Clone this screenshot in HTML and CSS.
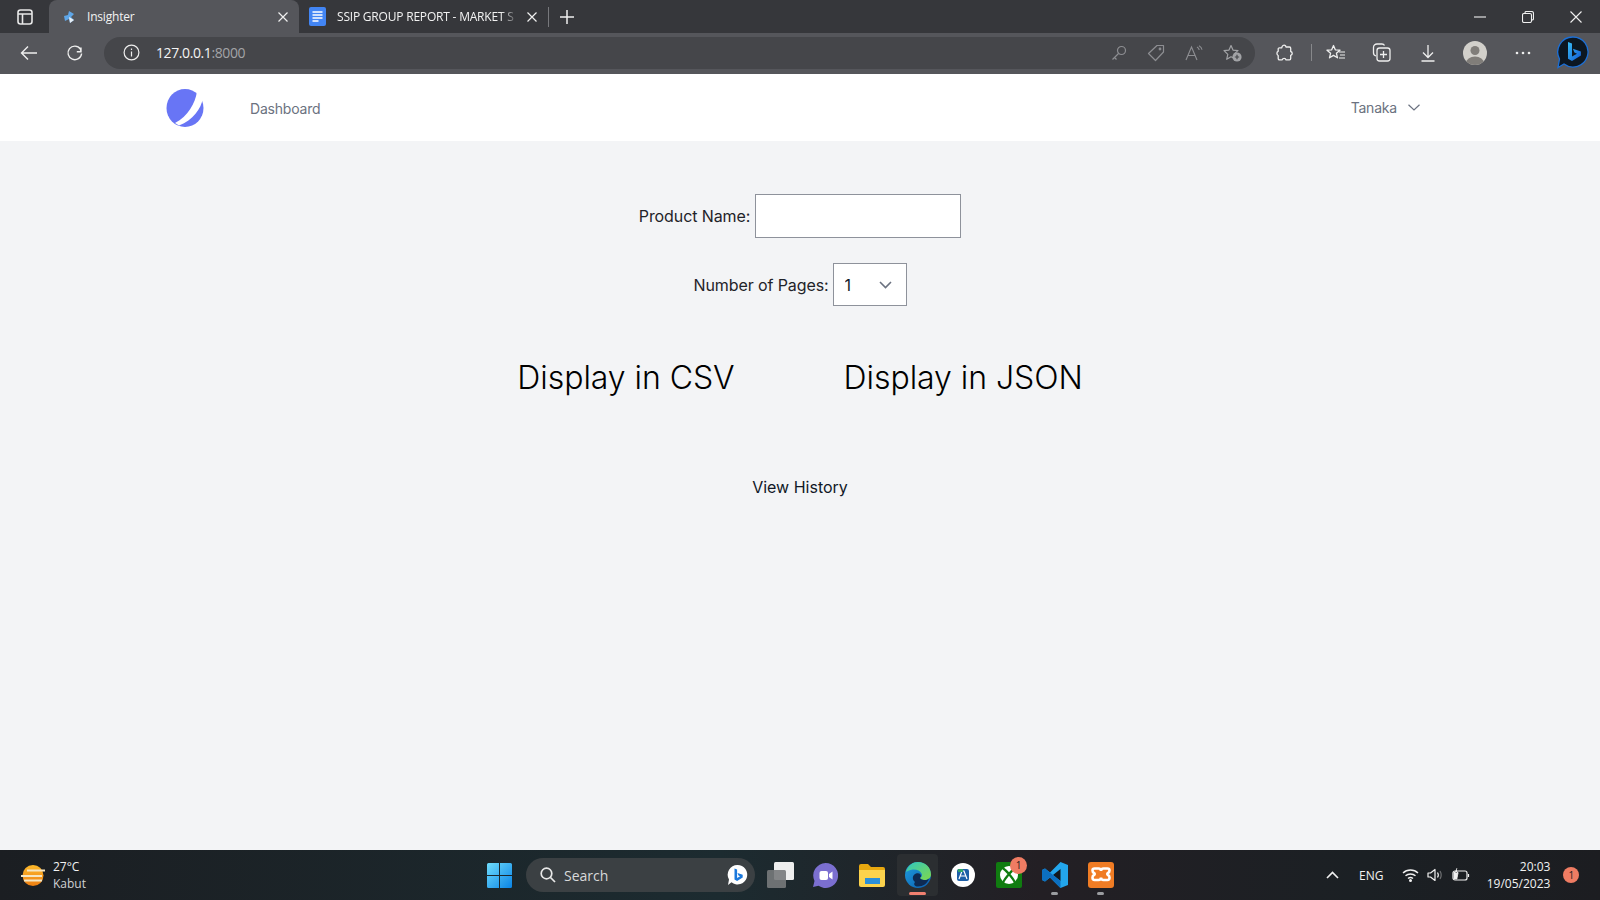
FILE: index.html
```html
<!DOCTYPE html>
<html lang="en">
<head>
    <meta charset="UTF-8">
    <meta name="viewport" content="width=device-width, initial-scale=1.0">
    <title>Insighter</title>
    <link rel="stylesheet" href="styles.css">
</head>
<body>

<!-- Browser tabs -->
<div class="tabbar">
    <svg class="tab-side" width="18" height="18" viewBox="0 0 18 18" fill="none" stroke="#e8e8e8" stroke-width="1.6"><rect x="2" y="2" width="14" height="14" rx="2.5"/><path d="M2 6h14M6.5 6v10" /></svg>
    <div class="tab tab-active">
        <svg class="favicon" width="14" height="14" viewBox="0 0 14 14"><path d="M7 1l5 3-3 3 3 3-4 3-1-4-4 2-1-5 4-1z" fill="#5ea6e8"/><path d="M7 7l5 3-4 3z" fill="#e8eef5"/></svg>
        <span class="tab-title">Insighter</span>
        <svg class="tab-close" width="12" height="12" viewBox="0 0 12 12" stroke="#f0f0f0" stroke-width="1.2"><path d="M1.5 1.5l9 9M10.5 1.5l-9 9"/></svg>
    </div>
    <div class="tab tab-docs">
        <svg class="docs-icon" width="17" height="19" viewBox="0 0 17 19"><rect width="17" height="19" rx="2" fill="#4285f4"/><path d="M3.5 5h10M3.5 8h10M3.5 11h10M3.5 14h6" stroke="#fff" stroke-width="1.5"/></svg>
        <span class="tab-title tab-title-fade">SSIP GROUP REPORT - MARKET S</span>
        <svg class="tab-close" width="12" height="12" viewBox="0 0 12 12" stroke="#f0f0f0" stroke-width="1.2"><path d="M1.5 1.5l9 9M10.5 1.5l-9 9"/></svg>
    </div>
    <div class="tab-divider"></div>
    <svg class="tab-new" width="16" height="16" viewBox="0 0 16 16" stroke="#f0f0f0" stroke-width="1.5"><path d="M8 1v14M1 8h14"/></svg>
    <div class="window-btns">
        <svg width="12" height="12" viewBox="0 0 12 12" stroke="#f0f0f0" stroke-width="1.1"><path d="M0 6h12"/></svg>
        <svg width="12" height="12" viewBox="0 0 12 12" fill="none" stroke="#f0f0f0" stroke-width="1.1"><rect x="0.5" y="2.5" width="9" height="9" rx="1.5"/><path d="M3 2.5V1.8C3 1 3.5.5 4.3.5h5.2c1.2 0 2 .8 2 2v5.2c0 .8-.5 1.3-1.5 1.3"/></svg>
        <svg width="12" height="12" viewBox="0 0 12 12" stroke="#f0f0f0" stroke-width="1.1"><path d="M.5.5l11 11M11.5.5l-11 11"/></svg>
    </div>
</div>

<!-- Browser toolbar -->
<div class="toolbar">
    <svg class="tool-back" width="18" height="16" viewBox="0 0 18 16" fill="none" stroke="#eee" stroke-width="1.4"><path d="M17 8H1.5M8 1.5L1.5 8 8 14.5"/></svg>
    <svg class="tool-reload" width="18" height="18" viewBox="0 0 18 18" fill="none" stroke="#eee" stroke-width="1.4"><path d="M15 3.5v4.2h-4.2M15.6 9.5A6.8 6.8 0 1 1 14.4 5l.6 2.7"/></svg>
    <div class="address">
        <svg class="addr-info" width="17" height="17" viewBox="0 0 17 17" fill="none" stroke="#eee" stroke-width="1.2"><circle cx="8.5" cy="8.5" r="7.4"/><path d="M8.5 7.5v5M8.5 4.5v1.4"/></svg>
        <span class="addr-url">127.0.0.1<span class="addr-port">:8000</span></span>
        <div class="addr-icons">
            <svg width="16" height="16" viewBox="0 0 16 16" fill="none" stroke="#8d8e92" stroke-width="1.2"><circle cx="10.5" cy="5.5" r="4"/><path d="M7.5 8.5l-6 6M3.5 12.5l2 2"/></svg>
            <svg width="18" height="18" viewBox="0 0 18 18" fill="none" stroke="#8d8e92" stroke-width="1.2"><path d="M10 1.5h6.5V8L8.5 16.5 1.5 9.5z" stroke-linejoin="round"/><circle cx="13" cy="5" r=".8"/></svg>
            <svg width="18" height="16" viewBox="0 0 18 16" fill="none" stroke="#8d8e92" stroke-width="1.1"><path d="M1 15L6.5 2 12 15M3 10.5h7M12 2c1.3.7 2 1.7 2.2 3M14 .8c1.8 1 2.8 2.4 3 4"/></svg>
            <svg width="19" height="18" viewBox="0 0 19 18"><path d="M8 1.5l2 4.6 5 .5-3.8 3.3 1.1 4.9L8 12.700l-4.300 2.600 1.100-4.900L1 6.600l5-.5z" fill="none" stroke="#a2a3a6" stroke-width="1.2" stroke-linejoin="round"/><circle cx="14" cy="13" r="4.600" fill="#a2a3a6"/><path d="M14 10.800v4.400M11.800 13h4.400" stroke="#45464a" stroke-width="1.200"/></svg>
        </div>
    </div>
    <svg class="tool-ext" width="18" height="18" viewBox="0 0 18 18" fill="none" stroke="#eee" stroke-width="1.300"><path d="M7 1.500c1.300-.8 2.800 0 3 1.500h3.500c.8 0 1.200.5 1.200 1.200V7.500c1.800.3 2.300 3.300 0 3.800v3.300c0 .8-.5 1.200-1.200 1.200H10c-.4-2-3.300-2-3.800 0H3.500c-.8 0-1.300-.5-1.300-1.200v-3.100C.5 11 .5 7.500 2.200 7.300V5c0-.7.500-1.200 1.300-1.200h2.300c0-1 .4-1.800 1.200-2.300z" stroke-linejoin="round"/></svg>
    <div class="tool-sep"></div>
    <svg class="tool-fav" width="20" height="18" viewBox="0 0 20 18" fill="none" stroke="#eee" stroke-width="1.300"><path d="M7.500 1.500l1.800 4.300 4.700.4-3.600 3 1.100 4.600-4-2.400-4 2.400 1.100-4.600L1 6.200l4.700-.4z" stroke-linejoin="round"/><path d="M13 8h6M14 11h5M13 14h6" stroke-width="1.100"/></svg>
    <svg class="tool-coll" width="20" height="19" viewBox="0 0 20 19" fill="none" stroke="#eee" stroke-width="1.300"><path d="M5 1h5c1.200 0 2 .5 2.500 1.500M4 13c-1.500-.5-2.500-1.500-2.500-3V4.500C1.500 2.500 3 1 5 1"/><rect x="5" y="5" width="13" height="13" rx="2.500"/><path d="M11.500 8v7M8 11.500h7"/></svg>
    <svg class="tool-down" width="16" height="18" viewBox="0 0 16 18" fill="none" stroke="#eee" stroke-width="1.300"><path d="M8 1v12M3 8.500L8 13.500l5-5M1.500 17h13"/></svg>
    <svg class="tool-avatar" width="24" height="24" viewBox="0 0 24 24"><clipPath id="avatarClip"><circle cx="12" cy="12" r="12"/></clipPath><circle cx="12" cy="12" r="12" fill="#d2d0cb"/><g clip-path="url(#avatarClip)" fill="#807d79"><circle cx="12" cy="9.500" r="4.500"/><ellipse cx="12" cy="22" rx="9" ry="6.500"/></g></svg>
    <svg class="tool-more" width="16" height="4" viewBox="0 0 16 4" fill="#eee"><circle cx="2" cy="2" r="1.300"/><circle cx="8" cy="2" r="1.300"/><circle cx="14" cy="2" r="1.300"/></svg>
    <svg class="tool-bing" width="32" height="33" viewBox="0 0 32 33"><defs><linearGradient id="bingGrad" x1="0" y1="0" x2="1" y2="1"><stop offset="0" stop-color="#37bdf5"/><stop offset="1" stop-color="#1259d6"/></linearGradient></defs><path d="M16 1a15 15 0 1 1-9 27L1 31.500 2.500 23A15 15 0 0 1 16 1z" fill="#0c1722" stroke="#1b6fd6" stroke-width="1.300"/><path d="M11 6l4 1.500v13l5-2.800-2.600-1.200-1.500-3.800 8 2.900v4L15 25l-4-2.200z" fill="url(#bingGrad)"/></svg>
</div>

<!-- App nav -->
<nav class="nav">
    <svg class="nav-logo" width="38" height="38" viewBox="0 0 38 38"><ellipse cx="19" cy="19" rx="18.500" ry="19" fill="#6875f5"/><path d="M31 2.500C29 15 22 27 9 34l4 2.500C27 31 35 20 37 9z" fill="#fff"/></svg>
    <a class="nav-link" href="#">Dashboard</a>
    <div class="nav-user">
        <span>Tanaka</span>
        <svg width="12" height="7" viewBox="0 0 12 7" fill="none" stroke="#6b7280" stroke-width="1.200"><path d="M.5.700L6 6l5.500-5.300"/></svg>
    </div>
</nav>

<!-- Form -->
<main class="content">
    <div class="form-row">
        <label for="productName">Product Name:</label>
        <input type="text" id="productName" class="text-input">
    </div>
    <div class="form-row">
        <label for="pages">Number of Pages:</label>
        <div class="select-wrap">
            <select id="pages" class="pages-select">
                <option>1</option>
            </select>
            <svg class="select-arrow" width="13" height="8" viewBox="0 0 13 8" fill="none" stroke="#6b7280" stroke-width="1.600"><path d="M1 1l5.500 5.500L12 1"/></svg>
        </div>
    </div>
    <div class="display-row">
        <button type="button" class="display-btn">Display in CSV</button>
        <button type="button" class="display-btn">Display in JSON</button>
    </div>
    <a class="history-link" href="#">View History</a>
</main>

<!-- Windows taskbar -->
<footer class="taskbar">
    <div class="weather">
        <svg width="26" height="21" viewBox="0 0 26 21"><defs><linearGradient id="sunGrad" x1="0" y1="0" x2="0" y2="1"><stop offset="0" stop-color="#fdb92a"/><stop offset="1" stop-color="#ee7f12"/></linearGradient></defs><circle cx="13" cy="10.500" r="10.500" fill="url(#sunGrad)"/><path d="M7 5.500h18M1 11h21M4 15.500h18" stroke="#f5e6c2" stroke-width="1.800"/></svg>
        <div class="weather-text">
            <span class="weather-temp">27°C</span>
            <span class="weather-name">Kabut</span>
        </div>
    </div>
    <div class="task-center">
        <svg class="task-win" width="25" height="25" viewBox="0 0 25 25"><defs><linearGradient id="winGrad" x1="0" y1="0" x2="1" y2="1"><stop offset="0" stop-color="#6fdcfb"/><stop offset="1" stop-color="#0a84e6"/></linearGradient></defs><path d="M0 1.500A1.500 1.500 0 0 1 1.500 0H12v12H0zM13 0h10.500A1.500 1.500 0 0 1 25 1.500V12H13zM0 13h12v12H1.500A1.500 1.500 0 0 1 0 23.500zM13 13h12v10.500a1.500 1.500 0 0 1-1.500 1.500H13z" fill="url(#winGrad)"/></svg>
        <div class="task-search">
            <svg width="16" height="16" viewBox="0 0 16 16" fill="none" stroke="#e8e8e8" stroke-width="1.700"><circle cx="6.500" cy="6.500" r="5.300"/><path d="M10.500 10.500L15 15"/></svg>
            <span class="search-text">Search</span>
            <svg class="search-bing" width="21" height="22" viewBox="0 0 21 22"><path d="M10.500 1a9.700 9.700 0 1 1-6 17.300L1 21l1-5.500A9.700 9.700 0 0 1 10.500 1z" fill="#fff"/><path d="M7.500 4.500l2.600 1v8.500l3-1.800-1.600-.8-1-2.500 5.200 1.900v2.600l-5.600 3.500-2.600-1.400z" fill="#1a78dc"/></svg>
        </div>
        <svg class="task-view" width="27" height="26" viewBox="0 0 27 26"><rect x="7" y="0" width="20" height="18" rx="1.500" fill="#eee"/><rect x="0" y="8" width="19" height="18" rx="1.500" fill="#77797b" fill-opacity=".9"/></svg>
        <svg class="task-icon task-teams" width="25" height="25" viewBox="0 0 25 25"><path d="M12.500 0a12.500 12.500 0 1 1-7 22.800L0 24l1.500-6A12.500 12.500 0 0 1 12.500 0z" fill="#7b6fd0"/><rect x="6.500" y="8" width="8.500" height="9" rx="2" fill="#fff"/><path d="M16 11l3.500-2.500v8L16 14z" fill="#fff"/></svg>
        <svg class="task-icon task-folder" width="26" height="23" viewBox="0 0 26 23"><path d="M0 2a2 2 0 0 1 2-2h7l3 3h12a2 2 0 0 1 2 2v3H0z" fill="#e8a80f"/><path d="M0 6h26v15a2 2 0 0 1-2 2H2a2 2 0 0 1-2-2z" fill="#fcd34d"/><rect x="6" y="14" width="15" height="6" fill="#2b8fd8"/></svg>
        <div class="task-edge">
            <svg width="26" height="26" viewBox="0 0 26 26"><defs><linearGradient id="edgeBlue" x1="0" y1="0" x2="1" y2="1"><stop offset="0" stop-color="#1f9ee0"/><stop offset="1" stop-color="#0b5cad"/></linearGradient><linearGradient id="edgeGreen" x1="0" y1="0" x2="1" y2="1"><stop offset="0" stop-color="#2fc6c0"/><stop offset="1" stop-color="#7fd84a"/></linearGradient></defs><circle cx="13" cy="13" r="13" fill="url(#edgeBlue)"/><path d="M1 10C3 3 8 0 13 0c7 0 13 5 13 12.500 0 3.500-3 5.500-6.500 5.500-2.500 0-4-1-4.500-2 2-1 2.500-3 1.500-4.500C15 8.500 11.500 7 7.500 7.500 5 8 2.500 9 1 10z" fill="url(#edgeGreen)"/><path d="M10 20c-3-2-3-7 1-8.500 3-1 5 .5 5 2.500 0 1-1 1.500-1 2 .5 1.500 3 2 5 2 2 0 3.500-.7 4-1.500-1.500 5-6 8-11 8-3 0-5-2-3-4.500z" fill="#0e2a52"/></svg>
            <span class="edge-bar"></span>
        </div>
        <svg class="task-icon task-word" width="24" height="24" viewBox="0 0 24 24"><circle cx="12" cy="12" r="12" fill="#fff"/><rect x="6" y="6" width="12" height="12" rx="2" fill="#1d5fa8"/><path d="M8 16l3-8h2l3 8M9.500 13h5" stroke="#fff" stroke-width="1.200" fill="none"/><path d="M7 6h5v3H7z" fill="#2fa36b"/></svg>
        <div class="task-xbox">
            <svg width="26" height="26" viewBox="0 0 26 26"><rect width="26" height="26" rx="2" fill="#107c10"/><circle cx="13" cy="13" r="9" fill="#fff"/><path d="M6 5.500C11 9 16 15 20 22M20 5.500C15 9 10 15 6 22" fill="none" stroke="#107c10" stroke-width="2.200"/></svg>
            <span class="task-badge">1</span>
        </div>
        <div class="task-running">
            <svg width="26" height="26" viewBox="0 0 26 26"><path d="M18.500 0L26 3v20l-7.500 3L8 15.500 3 19.500 0 18V8l3-1.500 5 4z" fill="#23a6ec"/><path d="M18.500 7L11 13l7.500 6z" fill="#12181d"/><path d="M0 8l3-1.500L18.500 19v7L8 15.500 3 19.500 0 18z" fill="#0c6fc0"/></svg>
            <span class="run-dot"></span>
        </div>
        <div class="task-running">
            <svg width="26" height="26" viewBox="0 0 26 26"><rect width="26" height="26" rx="3" fill="#f07c24"/><path d="M6.500 6.500h4c1.500 0 2.500 1 2.500 2.500 0-1.500 1-2.500 2.500-2.500h4c1.500 0 2 1 2 2s-.5 2-1.500 2.500c-1 .5-1 1.500 0 2 1 .5 1.500 1.500 1.500 2.500s-.5 2.500-2 2.500h-4c-1.500 0-2.500-1-2.500-2.500 0 1.500-1 2.500-2.500 2.500h-4c-1.500 0-2-1-2-2.500s.5-2 1.500-2.500c1-.5 1-1.500 0-2-1-.5-1.500-1.500-1.500-2.500s.5-2 2-2z" fill="none" stroke="#fff" stroke-width="2.600"/></svg>
            <span class="run-dot"></span>
        </div>
    </div>
    <div class="tray">
        <svg class="tray-up" width="13" height="8" viewBox="0 0 13 8" fill="none" stroke="#f0f0f0" stroke-width="1.600"><path d="M1 7l5.500-5.500L12 7"/></svg>
        <span class="tray-lang">ENG</span>
        <svg class="tray-wifi" width="17" height="14" viewBox="0 0 17 14" fill="none" stroke="#f0f0f0" stroke-width="1.400"><path d="M1 5c4-4 11-4 15 0M3.500 7.800c2.700-2.500 7.300-2.500 10 0M6 10.500c1.400-1.200 3.600-1.200 5 0"/><circle cx="8.500" cy="12.500" r=".8" fill="#f0f0f0"/></svg>
        <svg class="tray-sound" width="17" height="14" viewBox="0 0 17 14" fill="none" stroke="#f0f0f0" stroke-width="1.200"><path d="M1 5h2.500L8 1.500v11L3.500 9H1z" stroke-linejoin="round"/><path d="M10.500 4.500c1 1.500 1 3.500 0 5"/><path d="M13 3c1.500 2.500 1.500 5.500 0 8" stroke="#6e7072"/></svg>
        <svg class="tray-batt" width="18" height="14" viewBox="0 0 18 14" fill="none" stroke="#f0f0f0" stroke-width="1.200"><rect x="1" y="3" width="14" height="9" rx="2"/><path d="M16.500 6v3"/><path d="M2 4h4l-1 7H2z M5 0L3 5h3l-1 4" fill="#f0f0f0" stroke-width=".6"/></svg>
        <div class="tray-clock">
            <span>20:03</span>
            <span>19/05/2023</span>
        </div>
        <span class="tray-badge">1</span>
    </div>
</footer>

</body>
</html>
```

FILE: styles.css
```css
* {
    box-sizing: border-box;
}

html, body {
    height: 100%;
}

body {
    margin: 0;
    display: flex;
    flex-direction: column;
    font-family: Inter, "Liberation Sans", sans-serif;
    background-color: #f3f4f6;
    overflow: hidden;
}

svg {
    display: block;
    flex-shrink: 0;
}

/* browser tabs */
.tabbar {
    height: 33px;
    display: flex;
    align-items: center;
    background-color: #36373b;
    font-family: "Open Sans", sans-serif;
    font-size: 12px;
    color: #f2f2f2;
}

.tab-side {
    margin: 0 15px 0 16px;
}

.tab {
    height: 33px;
    display: flex;
    align-items: center;
}

.tab-active {
    width: 250px;
    padding: 0 0 0 13px;
    background-color: #55565b;
    border-radius: 8px 8px 0 0;
}

.tab-active .tab-title {
    margin-left: 11px;
    width: 190px;
}

.tab-docs {
    margin-left: 10px;
}

.tab-docs .docs-icon {
    margin-right: 11px;
}

.tab-title {
    white-space: nowrap;
    overflow: hidden;
    letter-spacing: -0.2px;
}

.tab-title-fade {
    width: 182px;
    -webkit-mask-image: linear-gradient(to right, #000 90%, transparent);
    mask-image: linear-gradient(to right, #000 90%, transparent);
}

.tab-docs .tab-close {
    margin-left: 7px;
}

.tab-divider {
    width: 1px;
    height: 20px;
    margin-left: 10px;
    background-color: #77787c;
}

.tab-new {
    margin-left: 10px;
}

.window-btns {
    margin-left: auto;
    display: flex;
    align-items: center;
    gap: 36px;
    padding-right: 18px;
}

/* browser toolbar */
.toolbar {
    height: 41px;
    padding-bottom: 2px;
    display: flex;
    align-items: center;
    background-color: #55565b;
}

.tool-back {
    margin-left: 20px;
}

.tool-reload {
    margin-left: 28px;
}

.address {
    width: 1151px;
    height: 32px;
    margin-left: 20px;
    display: flex;
    align-items: center;
    padding: 0 13px 0 19px;
    background-color: #45464a;
    border-radius: 16px;
    font-family: "Open Sans", sans-serif;
    font-size: 14px;
    color: #f4f4f4;
}

.addr-url {
    margin-left: 16px;
    letter-spacing: -0.4px;
}

.addr-port {
    color: #a3a4a7;
}

.addr-icons {
    margin-left: auto;
    display: flex;
    align-items: center;
    gap: 20px;
}

.tool-ext {
    margin-left: 21px;
}

.tool-sep {
    width: 1px;
    height: 17px;
    margin-left: 17px;
    background-color: #87888b;
}

.tool-fav {
    margin-left: 14px;
}

.tool-coll {
    margin-left: 26px;
}

.tool-down {
    margin-left: 28px;
}

.tool-avatar {
    margin-left: 27px;
}

.tool-more {
    margin-left: 28px;
}

.tool-bing {
    margin-left: 26px;
}

/* app nav */
.nav {
    height: 67px;
    display: flex;
    align-items: center;
    padding: 0 180px 0 166px;
    background-color: #fff;
    font-size: 14px;
    letter-spacing: -0.2px;
    color: #6b7280;
}

.nav-logo {
    margin-top: 1px;
}

.nav-link {
    margin-left: 46px;
    margin-top: 2px;
    color: #6b7280;
    text-decoration: none;
}

.nav-user {
    margin-left: auto;
    display: flex;
    align-items: center;
    gap: 11px;
}

/* form */
.content {
    flex: 1;
    display: flex;
    flex-direction: column;
    align-items: center;
    padding-top: 53px;
}

.form-row {
    margin-bottom: 25px;
    display: flex;
    align-items: center;
    gap: 4px;
    font-size: 16px;
    letter-spacing: -0.1px;
    color: #1f2329;
}

.text-input {
    width: 206px;
    height: 44px;
    margin-left: 1px;
    background-color: #fff;
    border: 1px solid #8e929b;
    border-radius: 0;
}

.select-wrap {
    position: relative;
}

.pages-select {
    display: block;
    width: 74px;
    height: 43px;
    padding: 0 11px;
    appearance: none;
    -webkit-appearance: none;
    background-color: #fff;
    border: 1px solid #8e929b;
    border-radius: 0;
    font-family: inherit;
    font-size: 16px;
    color: #111827;
}

.select-arrow {
    position: absolute;
    right: 15px;
    top: 18px;
}

.display-row {
    margin-top: 25px;
    display: flex;
    gap: 109px;
}

.display-btn {
    padding: 0;
    background: none;
    border: none;
    font-family: inherit;
    font-size: 32px;
    font-weight: 300;
    letter-spacing: -0.05px;
    line-height: 44px;
    color: #000;
    cursor: pointer;
}

.history-link {
    margin-top: 75px;
    font-size: 16px;
    line-height: 24px;
    color: #111827;
    text-decoration: none;
}

/* windows taskbar */
.taskbar {
    height: 50px;
    display: flex;
    align-items: center;
    background: linear-gradient(to right, #1b1e22, #1c2b30 45%, #231f24 65%, #1b2024 85%, #1c1d21);
    color: #f2f2f2;
    font-family: "Open Sans", sans-serif;
}

.weather {
    width: 487px;
    display: flex;
    align-items: center;
    gap: 7px;
    padding-left: 20px;
}

.weather-text {
    display: flex;
    flex-direction: column;
    font-size: 12px;
    line-height: 17px;
}

.weather-name {
    color: #cfd1d3;
}

.task-center {
    display: flex;
    align-items: center;
}

.task-search {
    width: 229px;
    height: 34px;
    margin-left: 14px;
    display: flex;
    align-items: center;
    padding: 0 7px 0 14px;
    background-color: #3b4043;
    border-radius: 17px;
    font-size: 14px;
    color: #d8d9da;
}

.search-text {
    margin-left: 8px;
}

.search-bing {
    margin-left: auto;
}

.task-view {
    margin-left: 12px;
}

.task-icon {
    margin-left: 20px;
}

.task-teams {
    margin-left: 19px;
}

.task-folder {
    margin-left: 21px;
}

.task-word {
    margin-left: 13px;
}

.task-edge {
    position: relative;
    width: 41px;
    height: 42px;
    margin-left: 12px;
    display: flex;
    align-items: center;
    justify-content: center;
    background-color: #2b2e31;
    border-radius: 4px;
}

.edge-bar {
    position: absolute;
    left: 12px;
    bottom: 1px;
    width: 17px;
    height: 3px;
    background-color: #f08070;
    border-radius: 2px;
}

.task-xbox {
    position: relative;
    margin-left: 21px;
}

.task-badge {
    position: absolute;
    top: -5px;
    right: -5px;
    width: 17px;
    height: 17px;
    background-color: #ef7c63;
    border-radius: 50%;
    font-size: 10px;
    line-height: 17px;
    text-align: center;
    color: #1c1d21;
}

.task-running {
    position: relative;
    margin-left: 20px;
}

.run-dot {
    position: absolute;
    left: 9px;
    bottom: -7px;
    width: 7px;
    height: 3px;
    background-color: #9b9da0;
    border-radius: 2px;
}

.tray {
    flex: 1;
    display: flex;
    align-items: center;
    font-size: 12px;
}

.tray-up {
    margin-left: 212px;
}

.tray-lang {
    margin-left: 20px;
}

.tray-wifi {
    margin-left: 19px;
}

.tray-sound {
    margin-left: 8px;
}

.tray-batt {
    margin-left: 8px;
}

.tray-clock {
    margin-left: 10px;
    width: 70px;
    display: flex;
    flex-direction: column;
    align-items: flex-end;
    line-height: 17px;
}

.tray-badge {
    width: 16px;
    height: 16px;
    margin-left: 13px;
    background-color: #ef7c63;
    border-radius: 50%;
    font-size: 10px;
    line-height: 16px;
    text-align: center;
    color: #1c1d21;
}
```
